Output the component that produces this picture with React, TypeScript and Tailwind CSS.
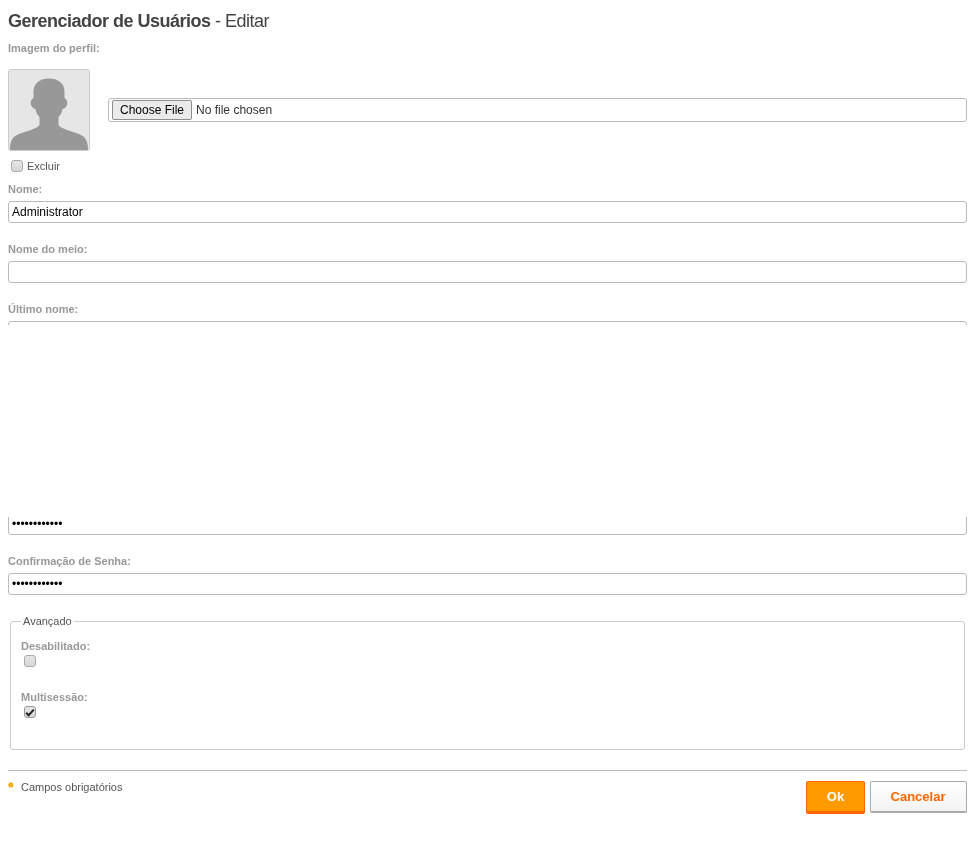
import React from "react";

const labelCls = "block h-[13px] text-[11px] leading-[13px] font-bold text-[#999]";
const inputCls = "block w-full h-[22px] rounded-[3px] border border-[#bbb] bg-white px-[3px] text-[12px] text-black outline-none font-['Liberation_Sans',Arial,sans-serif]";

function Box({ checked }: { checked?: boolean }) {
  return (
    <span className={`flex h-[12px] w-[12px] items-center justify-center rounded-[3px] border bg-gradient-to-b from-[#e6e6e6] to-[#d6d6d6] ${checked ? "border-[#999]" : "border-[#aaa]"}`}>
      {checked && (
        <svg width="10" height="9" viewBox="0 0 10 9">
          <path d="M1.200 4.800 L3.600 7.200 L8.800 1.600" fill="none" stroke="#222" strokeWidth="2" />
        </svg>
      )}
    </span>
  );
}

function Avatar() {
  return (
    <div className="h-[82px] w-[82px] overflow-hidden rounded-[3px] border border-[#ccc] bg-[#e6e6e6]">
      <svg width="80" height="80" viewBox="0 0 80 80" className="block">
        <path
          fill="#989898"
          d="M40 8.500C31 8.500 24.500 13 24.500 22V28C22.500 29 21.700 31 21.700 33C21.700 36 24 38.500 26.500 39C27 42.500 28.500 45 30.500 47V55C29 57 26 58.500 22 60C16 62 9 63.500 5 67C2 70 1 74 1 80H79C79 74 78 70 75 67C71 63.500 64 62 58 60C54 58.500 51 57 49.500 55V47C51.500 45 53 42.500 53.500 39C56 38.500 58.300 36 58.300 33C58.300 31 57.500 29 55.500 28V22C55.500 13 49 8.500 40 8.500Z"
        />
      </svg>
    </div>
  );
}

export default function App() {
  return (
    <div className="h-[847px] w-[975px] overflow-hidden bg-white">
      <div className="px-[8px] pt-[11px] antialiased font-['Liberation_Sans',Arial,sans-serif] [will-change:transform]">
        <h1 className="h-[21px] text-[18px] leading-[21px] tracking-[-0.5px] text-[#444] font-normal">
          <span className="font-bold">Gerenciador de Usuários</span> - Editar
        </h1>
        <label className={`${labelCls} mt-[10px]`}>Imagem do perfil:</label>

        <div className="mt-[14px] flex items-center gap-[18px]">
          <Avatar />
          <input
            type="file"
            className="block h-[24px] flex-1 rounded-[3px] border border-[#bbb] pl-[3px] pt-[1px] text-[12px] text-[#333] file:mr-[4px] file:h-[20px] file:rounded-[2px] file:border file:border-[#8f8f8f] file:bg-[#ebebeb] file:px-[7px] file:text-[12px] file:text-black"
          />
        </div>
        <div className="mt-[9px] flex h-[12px] items-center pl-[3px]">
          <Box />
          <span className="ml-[4px] mt-[1px] text-[11px] text-[#555]">Excluir</span>
        </div>

        <label className={`${labelCls} mt-[11px]`}>Nome:</label>
        <input className={`${inputCls} mt-[5px]`} defaultValue="Administrator" />

        <label className={`${labelCls} mt-[20px]`}>Nome do meio:</label>
        <input className={`${inputCls} mt-[5px]`} />

        <label className={`${labelCls} mt-[20px]`}>Último nome:</label>
        <div className="mt-[5px] h-[4px] overflow-hidden">
          <input className={inputCls} />
        </div>

        <div className="mt-[192px] h-[18px] overflow-hidden">
          <input type="password" className={`${inputCls} -mt-[4px]`} defaultValue="administra12" />
        </div>

        <label className={`${labelCls} mt-[20px]`}>Confirmação de Senha:</label>
        <input type="password" className={`${inputCls} mt-[5px]`} defaultValue="administra12" />

        <fieldset className="mx-[2px] mt-[20px] h-[135px] rounded-[3px] border border-[#ccc] px-[10px]">
          <legend className="px-[2px] text-[11px] leading-[13px] text-[#555]">Avançado</legend>
          <label className={`${labelCls} mt-[12px]`}>Desabilitado:</label>
          <div className="mt-[2px] pl-[3px]"><Box /></div>
          <label className={`${labelCls} mt-[24px]`}>Multisessão:</label>
          <div className="mt-[2px] pl-[3px]"><Box checked /></div>
        </fieldset>

        <div className="mt-[20px] flex justify-between border-t border-[#bbb] pt-[10px]">
          <div className="flex h-[13px] items-center">
            <svg width="6" height="6" viewBox="0 0 6 6" className="relative top-[-3px] block">
              <circle cx="2.800" cy="3" r="2.500" fill="#f7a800" />
              <circle cx="2.800" cy="3" r="0.900" fill="#ffc850" />
            </svg>
            <span className="ml-[7px] text-[11px] leading-[13px] text-[#555]">Campos obrigatórios</span>
          </div>
          <div className="flex items-start gap-[5px]">
            <button className="h-[33px] w-[59px] rounded-[2px] border border-[#f60] border-b-[3px] bg-[#f90] text-[13px] font-bold text-white">Ok</button>
            <button className="h-[32px] w-[97px] rounded-[2px] border border-[#aaa] border-b-[2px] bg-gradient-to-b from-white to-[#f3f3f3] text-[13px] font-bold text-[#f60] pr-[1px]">Cancelar</button>
          </div>
        </div>
      </div>
    </div>
  );
}
